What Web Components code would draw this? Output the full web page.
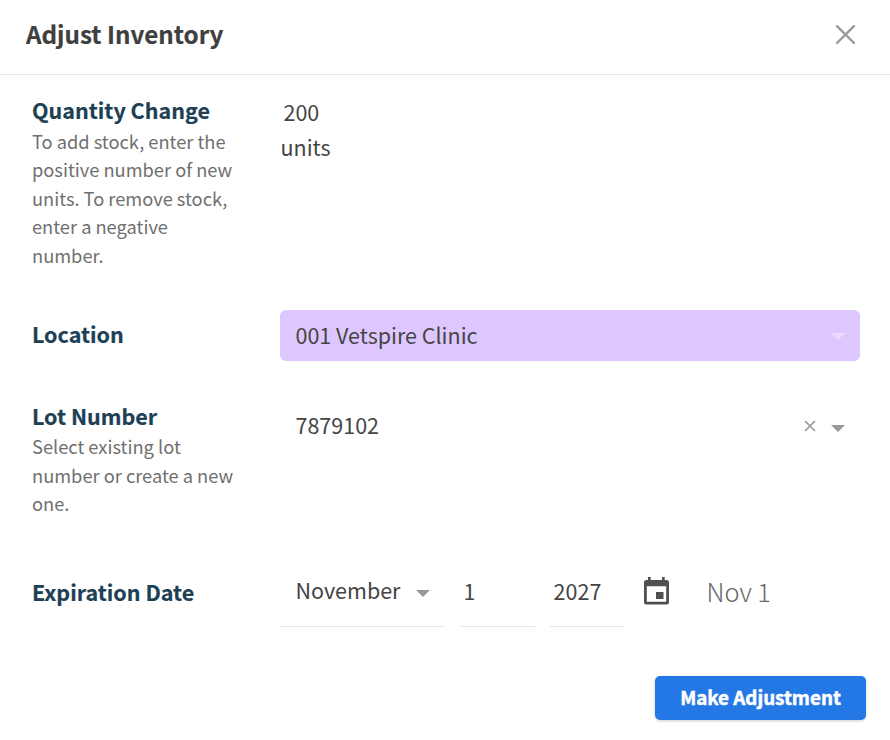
<!DOCTYPE html>
<html lang="en">
<head>
<meta charset="utf-8">
<title>Adjust Inventory</title>
<style>
body {
    margin: 0;
    background: #fff;
    color: #444;
    font-family: "Noto Sans CJK SC", "Noto Sans", sans-serif;
    font-size: 21.5px;
}
</style>
</head>
<body>

<modal-dialog>
    <span slot="title">Adjust Inventory</span>

    <form-row style="--height: 217px; --help-top: -.3px" label="Quantity Change">
        <span slot="help">To add stock, enter the positive number of new units. To remove stock, enter a negative number.</span>
        <quantity-field unit="units">200</quantity-field>
    </form-row>

    <form-row style="--height: 89px; --label-top: 7px" label="Location">
        <select-field locked>001 Vetspire Clinic</select-field>
    </form-row>

    <form-row style="--height: 169px; --help-top: -1px" label="Lot Number">
        <select-field clearable>7879102</select-field>
        <span slot="help">Select existing lot number or create a new one.</span>
    </form-row>

    <form-row style="--height: 66px; --label-top: 7px" label="Expiration Date">
        <date-field month="November" day="1" year="2027">Nov 1</date-field>
    </form-row>

    <action-button slot="footer">Make Adjustment</action-button>
</modal-dialog>

<script>
// attach an open root and fill it
class BaseElement extends HTMLElement {
    connectedCallback() {
        if (this.shadowRoot) return;
        this.attachShadow({ mode: 'open' });
        this.shadowRoot.innerHTML = this.render();
    }
}

//========== MODAL ==========

class ModalDialog extends BaseElement {
    render() {
        return `
<style>
:host { display: block; height: 740px; box-sizing: border-box; overflow: hidden; }
header {
    display: flex;
    justify-content: space-between;
    height: 74px;
    padding: 0 34px 0 26px;
    border-bottom: 1px solid #e6e6e6;
}
h1 { margin: 0; font-size: 24.2px; font-weight: bold; line-height: 67px; color: #3f3f3f; -webkit-text-stroke: .2px; }
header svg { width: 21px; height: 21px; margin-top: 24px; }
main { padding: 18px 30px 0 32px; }
footer { display: flex; justify-content: flex-end; padding: 42px 24px 0 0; }
</style>
<header>
    <h1><slot name="title"></slot></h1>
    <svg viewBox="0 0 21 21" fill="none" stroke="#999" stroke-width="2.4" stroke-linecap="round"><path d="M2 2.2 19 19M19 2.2 2 19"/></svg>
</header>
<main><slot></slot></main>
<footer><slot name="footer"></slot></footer>
`;
    }
}
customElements.define('modal-dialog', ModalDialog);

//========== FORM ROW ==========

class FormRow extends BaseElement {
    render() {
        return `
<style>
:host { display: grid; grid-template-columns: 206px 1fr; column-gap: 42px; height: var(--height); }
h2 { margin: 0; padding-top: var(--label-top, 0); font-size: 21.5px; font-weight: bold; line-height: 34px; color: #1d4055; white-space: nowrap; -webkit-text-stroke: .2px; }
p { margin: var(--help-top, 0) 0 0; font-size: 18.25px; line-height: 28.5px; color: #6f6f6f; }
</style>
<div>
    <h2>${this.getAttribute('label')}</h2>
    <p><slot name="help"></slot></p>
</div>
<div><slot></slot></div>
`;
    }
}
customElements.define('form-row', FormRow);

//========== FIELDS ==========

class QuantityField extends BaseElement {
    render() {
        return `
<style>
:host { display: block; padding: 1px 0 0 .5px; line-height: 35px; }
.value { padding-left: 3px; }
</style>
<div class="value"><slot></slot></div>
<div>${this.getAttribute('unit')}</div>
`;
    }
}
customElements.define('quantity-field', QuantityField);

class SelectField extends BaseElement {
    render() {
        const clear = this.hasAttribute('clearable')
            ? '<svg class="clear" viewBox="0 0 12 12" fill="none" stroke="#999" stroke-width="1.7"><path d="M1 1l10 10M11 1 1 11"/></svg>'
            : '';
        return `
<style>
:host {
    display: flex;
    align-items: center;
    box-sizing: border-box;
    height: 51px;
    padding: 0 15px 0 15.5px;
    border-radius: 6px;
    line-height: 49px;
}
:host([locked]) { background: #dec7ff; --arrow: #ebdcff; --arrow-top: 1px; }
:host([clearable]) { padding-top: 2px; }
.value { flex: 1; padding-bottom: 2px; white-space: nowrap; }
.clear { width: 12px; height: 12px; margin: 1px 15px 0 0; }
.arrow { width: 14px; height: 7px; margin-top: var(--arrow-top, 5px); fill: var(--arrow, #999); }
</style>
<span class="value"><slot></slot></span>
${clear}
<svg class="arrow" viewBox="0 0 14 7"><path d="M0 0h14L7 7z"/></svg>
`;
    }
}
customElements.define('select-field', SelectField);

class DateField extends BaseElement {
    render() {
        return `
<style>
:host { display: flex; padding-top: 6px; }
.box { box-sizing: border-box; height: 53px; width: 75px; margin-left: 15px; padding: 1px 0 0 3.6px; border-bottom: 1px solid #e6e6e6; line-height: 32px; }
.month { width: 165px; margin-left: 0; padding: 0; }
select-field { height: 34px; line-height: 32px; }
.cal { width: 26px; height: 28px; margin: 3px 0 0 18px; fill: #505050; }
.hint { margin-left: 37.5px; font-size: 25.3px; font-weight: 300; line-height: 35px; color: #666; }
</style>
<div class="box month"><select-field>${this.getAttribute('month')}</select-field></div>
<div class="box">${this.getAttribute('day')}</div>
<div class="box">${this.getAttribute('year')}</div>
<svg class="cal" viewBox="-.5 0 26 28"><path fill-rule="evenodd" d="M4.5 0h2.7v3h11.3V0h2.7v3H23a2.5 2.5 0 0 1 2.5 2.5V25a2.5 2.5 0 0 1-2.5 2.5H3A2.5 2.5 0 0 1 .5 25V5.5A2.5 2.5 0 0 1 3 3h1.5zM3.3 9.3v15.5h19.4V9.3z"/><path d="M12.5 15H20v7h-7.5z"/></svg>
<span class="hint"><slot></slot></span>
`;
    }
}
customElements.define('date-field', DateField);

//========== BUTTON ==========

class ActionButton extends BaseElement {
    render() {
        return `
<style>
:host { display: block; }
button {
    display: block;
    width: 211px;
    height: 44px;
    padding: 0 0 3px;
    border: 0;
    border-radius: 5px;
    background: #2378e6;
    box-shadow: 0 1px 3px rgba(0, 0, 0, .2);
    color: #fff;
    font: bold 18.8px/40px "Noto Sans CJK SC", "Noto Sans", sans-serif;
    -webkit-text-stroke: .5px;
}
</style>
<button type="button"><slot></slot></button>
`;
    }
}
customElements.define('action-button', ActionButton);
</script>
</body>
</html>
